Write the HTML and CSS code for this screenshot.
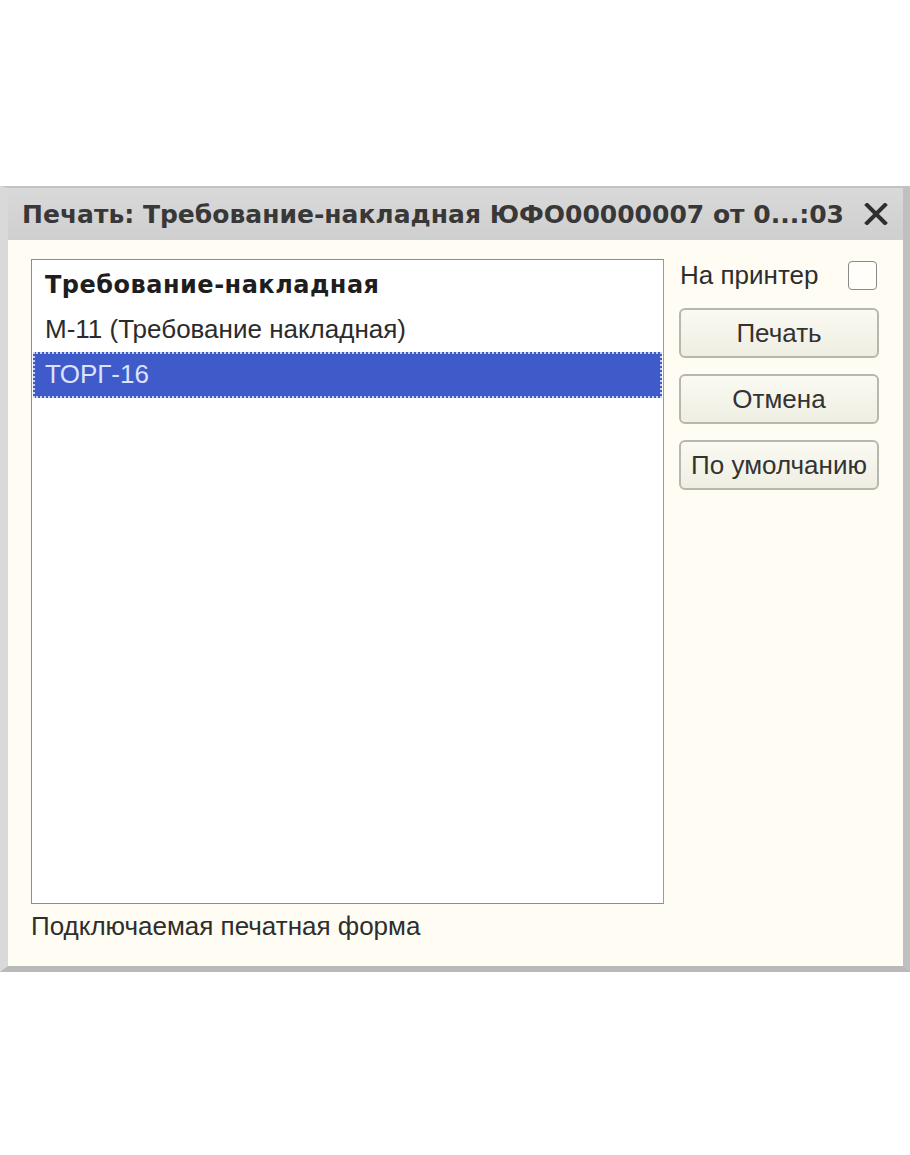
FILE: index.html
```html
<!DOCTYPE html>
<html lang="ru">
<head>
<meta charset="utf-8">
<title>Печать</title>
<link rel="stylesheet" href="styles.css">
</head>
<body>
<div class="dialog">
  <div class="titlebar">
    <span class="title">Печать: Требование-накладная ЮФО00000007 от 0...:03</span>
    <svg class="close" width="24" height="22" viewBox="0 0 24 22"><path d="M3 2 L21 20 M21 2 L3 20" stroke="#2f2f2f" stroke-width="4" stroke-linecap="square"/></svg>
  </div>
  <div class="body">
    <div class="main">
      <div class="list">
        <div class="row bold">Требование-накладная</div>
        <div class="row">М-11 (Требование накладная)</div>
        <div class="row selected">ТОРГ-16</div>
      </div>
      <div class="side">
        <label class="printer">
          <span>На принтер</span>
          <span class="checkbox"></span>
        </label>
        <button class="btn">Печать</button>
        <button class="btn">Отмена</button>
        <button class="btn">По умолчанию</button>
      </div>
    </div>
    <div class="status">Подключаемая печатная форма</div>
  </div>
</div>
</body>
</html>
```

FILE: styles.css
```css
html, body {
  margin: 0;
  padding: 0;
  background: #ffffff;
}

body {
  font-family: "Liberation Sans", Arial, sans-serif;
  color: #2e2e2e;
}

.dialog {
  margin-top: 186px;
  height: 786px;
  box-sizing: border-box;
  border-top: 2px solid #c2c2c2;
  border-left: 8px solid #d9d9d9;
  border-right: 7px solid #c0c0c0;
  border-bottom: 6px solid #b9b9b9;
  background: #fffdf3;
  display: flex;
  flex-direction: column;
}

.titlebar {
  height: 52px;
  flex: none;
  background: linear-gradient(#d9d9d9, #cfcfcf);
  display: flex;
  align-items: center;
  justify-content: space-between;
  padding: 0 15px 0 14px;
}

.title {
  font-family: "DejaVu Sans", sans-serif;
  font-weight: bold;
  font-size: 25px;
  color: #383838;
  white-space: nowrap;
}

.close {
  display: block;
}

.body {
  flex: 1;
  display: flex;
  flex-direction: column;
  padding: 19px 24px 0 23px;
}

.main {
  display: flex;
  gap: 15px;
}

.list {
  width: 633px;
  height: 645px;
  box-sizing: border-box;
  border: 1px solid #8c8c8c;
  border-right-color: #9a9a9a;
  background: #ffffff;
  padding: 3px 1px 0 1px;
}

.row {
  height: 45px;
  line-height: 45px;
  padding-left: 12px;
  font-size: 26px;
  color: #2b2b2b;
  white-space: nowrap;
}

.row.bold {
  font-family: "DejaVu Sans", sans-serif;
  font-size: 24px;
  font-weight: bold;
  letter-spacing: 0.5px;
  color: #1e1e1e;
  height: 44px;
}

.row.selected {
  background: #3f5bca;
  color: #dbe2fb;
  outline: 2px dotted #c9d3ff;
  outline-offset: -2px;
  height: 46px;
}

.side {
  width: 200px;
  display: flex;
  flex-direction: column;
}

.printer {
  display: flex;
  align-items: center;
  justify-content: space-between;
  height: 32px;
  font-size: 26px;
  color: #2e2e2e;
  padding-left: 1px;
  margin-bottom: 17px;
}

.checkbox {
  width: 27px;
  height: 27px;
  border: 1px solid #8a8a8a;
  border-radius: 4px;
  background: #fffef8;
  margin-right: 2px;
}

.btn {
  height: 50px;
  margin-bottom: 16px;
  border: 2px solid #b8b7ad;
  border-radius: 6px;
  background: linear-gradient(#fbfaf2, #efeee3);
  font-family: "Liberation Sans", Arial, sans-serif;
  font-size: 26px;
  color: #333333;
  padding: 0;
  cursor: pointer;
}

.status {
  margin-top: 8px;
  font-size: 26px;
  color: #2e2e2e;
  line-height: 28px;
}
```
